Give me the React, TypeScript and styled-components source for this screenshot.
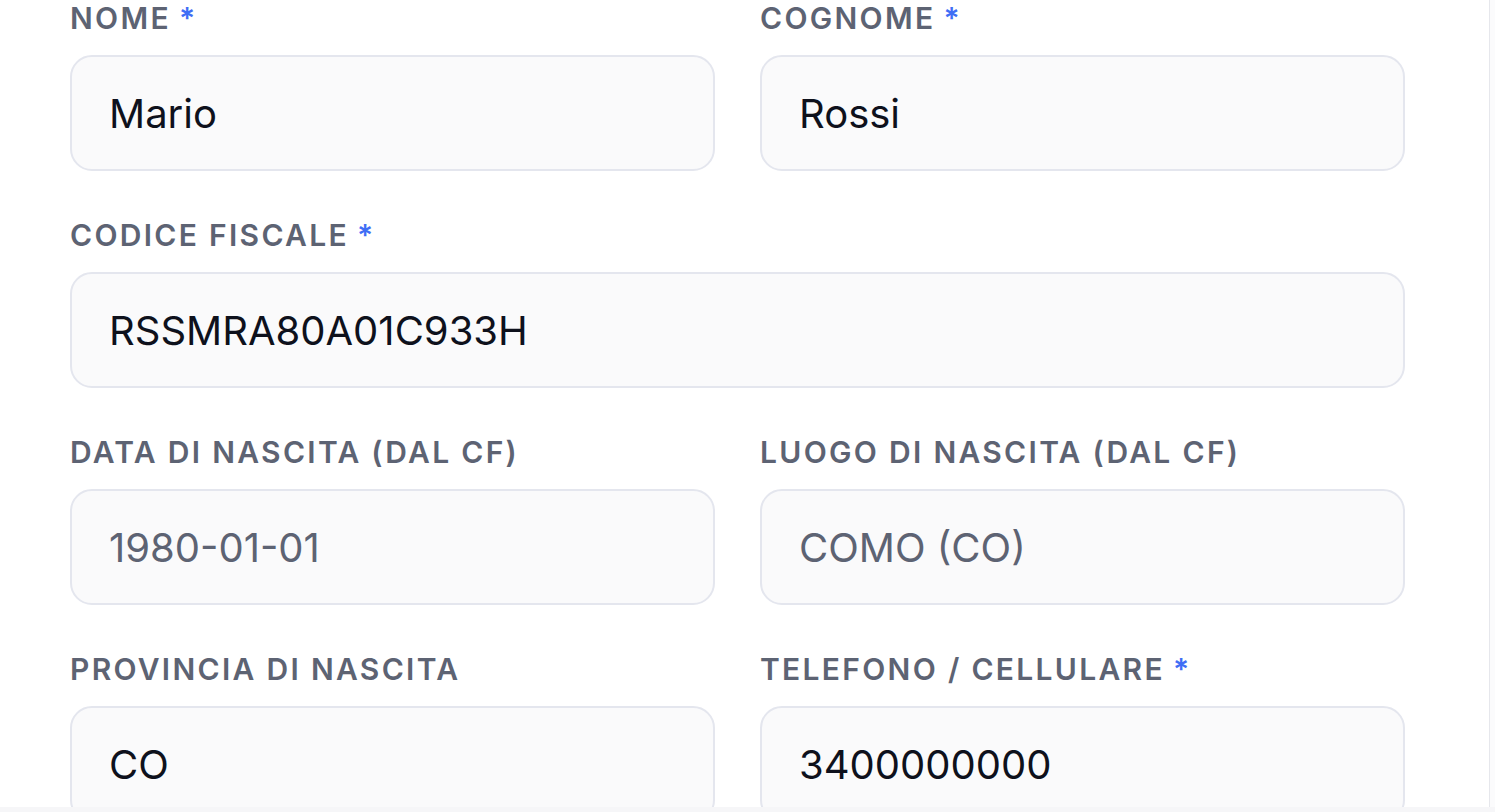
import React from 'react';
import styled, { createGlobalStyle } from 'styled-components';

const GlobalStyle = createGlobalStyle`
  html, body {
    margin: 0;
    padding: 0;
    background: #ffffff;
    font-family: Inter, "Noto Sans", "Liberation Sans", sans-serif;
    overflow: hidden;
  }
`;

const Page = styled.div`
  width: 1495px;
  height: 812px;
  display: flex;
  flex-direction: column;
  background: #f6f6f8;
  overflow: hidden;
`;

const Panel = styled.div`
  flex: 1;
  min-height: 0;
  display: flex;
  overflow: hidden;
  background: #fbfbfc;
`;

const Card = styled.div`
  width: 1489px;
  background: #ffffff;
  border-right: 1px solid #e6e7ec;
  overflow: hidden;
`;

const BottomEdge = styled.div`
  height: 5px;
  background: #f6f6f8;
`;

const Form = styled.div`
  width: 1335px;
  margin-left: 70px;
  display: grid;
  grid-template-columns: 1fr 1fr;
  column-gap: 45px;
  row-gap: 46px;
`;

const Field = styled.div<{ $full?: boolean }>`
  display: flex;
  flex-direction: column;
  gap: 19px;
  grid-column: ${p => (p.$full ? '1 / -1' : 'auto')};
`;

const Label = styled.label`
  font-size: 30px;
  line-height: 36px;
  font-weight: 600;
  letter-spacing: 2.3px;
  text-transform: uppercase;
  color: #5d6373;
`;

const Required = styled.span`
  color: #3f6ef5;
  margin-left: 8px;
`;

const Input = styled.input<{ $muted?: boolean }>`
  box-sizing: border-box;
  width: 100%;
  height: 116px;
  padding: 0 37px;
  border: 2.5px solid #e4e6ee;
  border-radius: 22px;
  background: #fafafb;
  font-family: inherit;
  font-size: 40px;
  color: ${p => (p.$muted ? '#5d6373' : '#0e111c')};
  outline: none;
`;

interface FieldData {
  label: string;
  value: string;
  required?: boolean;
  muted?: boolean;
  full?: boolean;
}

const fields: FieldData[] = [
  { label: 'Nome', value: 'Mario', required: true },
  { label: 'Cognome', value: 'Rossi', required: true },
  { label: 'Codice fiscale', value: 'RSSMRA80A01C933H', required: true, full: true },
  { label: 'Data di nascita (dal CF)', value: '1980-01-01', muted: true },
  { label: 'Luogo di nascita (dal CF)', value: 'COMO (CO)', muted: true },
  { label: 'Provincia di nascita', value: 'CO' },
  { label: 'Telefono / Cellulare', value: '3400000000', required: true },
];

const App: React.FC = () => (
  <>
    <GlobalStyle />
    <Page>
      <Panel>
        <Card>
          <Form>
            {fields.map(f => (
              <Field key={f.label} $full={f.full}>
                <Label>
                  {f.label}
                  {f.required && <Required>*</Required>}
                </Label>
                <Input defaultValue={f.value} readOnly={f.muted} $muted={f.muted} />
              </Field>
            ))}
          </Form>
        </Card>
      </Panel>
      <BottomEdge />
    </Page>
  </>
);

export default App;
